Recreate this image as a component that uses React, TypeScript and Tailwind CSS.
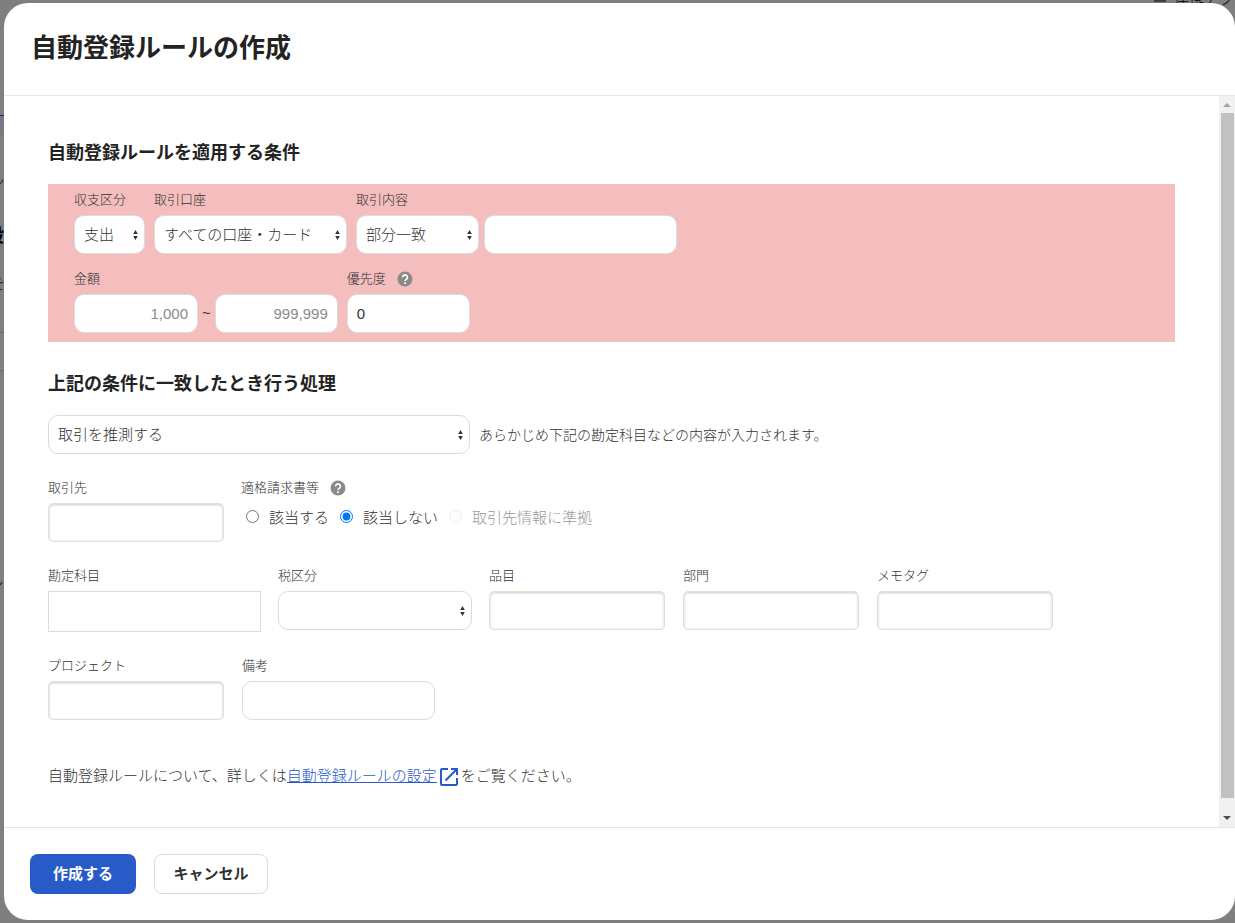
import { useId, useState } from "react";
import type { ReactNode } from "react";
import clsx from "clsx";

const controlBase = "block h-[39px] border bg-white px-[9px] text-[15px] text-[#323232] outline-none";

const inputVariants = {
  rounded: "rounded-[10px] border-[#dcdcdc]",
  warm: "rounded-[10px] border-[#e1dcd3]",
  square: "h-[41px] border-[#e1dcd3]",
  inset: "rounded-[5px] border-[#dfdfd8] shadow-[inset_0_1px_3px_rgba(0,0,0,0.2)]",
};

const invoiceOptions = [
  { value: "applicable", label: "該当する", disabled: false },
  { value: "not-applicable", label: "該当しない", disabled: false },
  { value: "partner", label: "取引先情報に準拠", disabled: true },
];

function HelpIcon() {
  return (
    <svg viewBox="0 0 16 16" className="h-4 w-4" aria-hidden="true">
      <circle cx="8" cy="8" r="7.5" fill="#8c8989" />
      <path d="M5.6 6.3a2.4 2.4 0 1 1 3.7 2C8.4 8.9 8 9.2 8 10.1" fill="none" stroke="#fff" strokeWidth="1.6" />
      <path d="M7.1 11.2h1.8v1.7H7.1z" fill="#fff" />
    </svg>
  );
}

function Field({
  id,
  label,
  help,
  children,
}: {
  id?: string;
  label: string;
  help?: boolean;
  children: ReactNode;
}) {
  return (
    <div>
      <div className="mb-[5px] flex h-[21px] items-center gap-[11px] text-[13px] leading-[21px]">
        <label htmlFor={id}>{label}</label>
        {help && (
          <button type="button" aria-label={`${label}のヘルプ`}>
            <HelpIcon />
          </button>
        )}
      </div>
      {children}
    </div>
  );
}

function Select({ id, label, options, className }: { id?: string; label?: string; options: string[]; className: string }) {
  return (
    <div className={clsx("relative", className)}>
      <select
        id={id}
        aria-label={label}
        className={clsx(controlBase, "w-full appearance-none rounded-[10px] border-[#dcdcdc] pt-px")}
      >
        {options.map((option) => (
          <option key={option}>{option}</option>
        ))}
      </select>
      <svg viewBox="0 0 5 10" className="pointer-events-none absolute right-[7px] top-[15px] h-[10px] w-[5px]" aria-hidden="true">
        <path d="M2.5 0 4.8 4H.2zM2.5 10 .2 6h4.6z" fill="#323232" />
      </svg>
    </div>
  );
}

function TextField({
  label,
  variant,
  className,
}: {
  label: string;
  variant: keyof typeof inputVariants;
  className: string;
}) {
  const id = useId();
  return (
    <Field id={id} label={label}>
      <input id={id} type="text" className={clsx(controlBase, inputVariants[variant], className)} />
    </Field>
  );
}

function SelectField({ label, options, className }: { label: string; options: string[]; className: string }) {
  const id = useId();
  return (
    <Field id={id} label={label}>
      <Select id={id} options={options} className={className} />
    </Field>
  );
}

// Dimmed page that peeks out around the dialog
function Backdrop() {
  return (
    <div aria-hidden="true" className="absolute inset-0 overflow-hidden bg-[#807f7f] text-[15px] leading-5 text-black">
      <span className="absolute -right-[14px] -top-[11px] flex h-5 items-center gap-[6px] whitespace-nowrap">
        <svg viewBox="0 0 16 16" className="h-4 w-4">
          <path d="M2 10h12M0 12.5h16" stroke="#000" strokeWidth="1" />
        </svg>
        連携アプリ
      </span>
      <div className="absolute left-0 top-[115px] h-5 w-2 border-t border-[#142c64] bg-[#777a84]" />
      <div className="absolute left-0 top-[332px] h-[39px] w-2 border-y border-[#6d6c69] bg-[#82817e]" />
      <span className="absolute -left-[11px] top-[168px]">ん</span>
      <span className="absolute -left-[14px] top-[226px] text-[18px] font-bold">設</span>
      <span className="absolute -left-[10px] top-[274px]">を</span>
      <span className="absolute -left-[11px] top-[570px]">し</span>
    </div>
  );
}

function ScrollRail() {
  return (
    <div aria-hidden="true" className="flex w-4 shrink-0 flex-col items-center bg-[#f1f1f1]">
      <svg viewBox="0 0 16 17" className="h-[17px] w-4">
        <path d="M8 7l4 4H4z" fill="#a3a3a3" />
      </svg>
      <div className="w-[13px] flex-1 bg-[#c1c1c1]" />
      <svg viewBox="0 0 16 29" className="h-[29px] w-4">
        <path d="M8 22l4-4H4z" fill="#505050" />
      </svg>
    </div>
  );
}

export default function App() {
  const [invoice, setInvoice] = useState("not-applicable");
  const amountId = useId();
  const contentId = useId();
  const priorityId = useId();

  return (
    <div className="relative flex min-h-screen flex-col pb-[3px] pl-1 pt-[3px] font-['Liberation_Sans','Noto_Sans_CJK_JP',sans-serif] font-light text-[#323232]">
      <Backdrop />
      <div
        role="dialog"
        aria-modal="true"
        aria-labelledby="dialog-title"
        className="relative flex flex-1 flex-col overflow-hidden rounded-3xl bg-white"
      >
        <header className="border-b border-[#e6e6e6] px-[27px] pb-[29px] pt-[27px]">
          <h1 id="dialog-title" className="text-[26px] font-bold leading-9 text-[#232323]">
            自動登録ルールの作成
          </h1>
        </header>

        <div className="flex flex-1">
          <main className="min-w-0 flex-1 px-11 pb-9 pt-[45px]">
            <h2 className="text-[18px] font-bold leading-6 text-[#232323]">自動登録ルールを適用する条件</h2>
            <section className="mt-[19px] flex flex-col gap-[14px] bg-[#f4bebe] pb-[9px] pl-[26px] pt-[5px]">
              <div className="flex gap-[9px]">
                <SelectField label="収支区分" options={["支出", "収入"]} className="w-[71px]" />
                <SelectField label="取引口座" options={["すべての口座・カード"]} className="w-[193px]" />
                <Field id={contentId} label="取引内容">
                  <div className="flex gap-[5px]">
                    <Select label="一致条件" options={["部分一致", "前方一致", "後方一致", "完全一致"]} className="w-[123px]" />
                    <input id={contentId} type="text" className={clsx(controlBase, inputVariants.rounded, "w-[193px]")} />
                  </div>
                </Field>
              </div>
              <div className="flex gap-[9px]">
                <Field id={amountId} label="金額">
                  <div className="flex items-center gap-1 text-[15px]">
                    <input
                      id={amountId}
                      type="text"
                      placeholder="1,000"
                      className={clsx(controlBase, inputVariants.rounded, "w-[124px] text-right placeholder:text-[#8c8989]")}
                    />
                    ~
                    <input
                      type="text"
                      aria-label="金額の上限"
                      placeholder="999,999"
                      className={clsx(controlBase, inputVariants.rounded, "w-[123px] text-right placeholder:text-[#8c8989]")}
                    />
                  </div>
                </Field>
                <Field id={priorityId} label="優先度" help>
                  <input
                    id={priorityId}
                    type="text"
                    defaultValue="0"
                    className={clsx(controlBase, inputVariants.rounded, "w-[123px]")}
                  />
                </Field>
              </div>
            </section>

            <h2 className="mt-[30px] text-[18px] font-bold leading-6 text-[#232323]">上記の条件に一致したとき行う処理</h2>
            <div className="mt-[19px] flex items-center gap-[9px]">
              <Select label="処理" options={["取引を推測する", "取引を登録する", "無視する"]} className="w-[422px]" />
              <p className="text-[14px] leading-5">あらかじめ下記の勘定科目などの内容が入力されます。</p>
            </div>

            <div className="mt-[23px] flex gap-[17px]">
              <TextField label="取引先" variant="inset" className="w-[176px]" />
              <Field label="適格請求書等" help>
                <div role="radiogroup" aria-label="適格請求書等" className="flex gap-[11px] pl-[5px] pt-[3px] text-[15px] leading-6">
                  {invoiceOptions.map((option) => (
                    <label
                      key={option.value}
                      className={clsx("flex items-center gap-[10px]", option.disabled && "text-[#9a9898]")}
                    >
                      <input
                        type="radio"
                        name="invoice"
                        value={option.value}
                        disabled={option.disabled}
                        checked={invoice === option.value}
                        onChange={() => setInvoice(option.value)}
                        className="mb-[3px] h-[13px] w-[13px] disabled:opacity-30"
                      />
                      {option.label}
                    </label>
                  ))}
                </div>
              </Field>
            </div>

            <div className="mt-[23px] flex gap-[17px]">
              <TextField label="勘定科目" variant="square" className="w-[213px]" />
              <SelectField label="税区分" options={[""]} className="w-[194px]" />
              <div className="flex gap-[18px]">
                <TextField label="品目" variant="inset" className="w-[176px]" />
                <TextField label="部門" variant="inset" className="w-[176px]" />
                <TextField label="メモタグ" variant="inset" className="w-[176px]" />
              </div>
            </div>

            <div className="mt-[23px] flex gap-[18px]">
              <TextField label="プロジェクト" variant="inset" className="w-[176px]" />
              <TextField label="備考" variant="warm" className="w-[193px]" />
            </div>

            <p className="mt-11 text-[15px] leading-6">
              自動登録ルールについて、詳しくは
              <a href="#rules" className="text-[#285ac8] underline">
                自動登録ルールの設定
                <svg viewBox="0 0 18 18" className="mx-[3px] inline-block h-[18px] w-[18px] align-[-5px]" aria-hidden="true">
                  <path d="M8 1H2a1 1 0 0 0-1 1v14a1 1 0 0 0 1 1h14a1 1 0 0 0 1-1v-6" fill="none" stroke="currentColor" strokeWidth="2" />
                  <path d="M11 1h6v6M17 1 5.5 12.5" fill="none" stroke="currentColor" strokeWidth="2" />
                </svg>
              </a>
              をご覧ください。
            </p>
          </main>
          <ScrollRail />
        </div>

        <footer className="flex gap-[18px] border-t border-[#e6e6e6] p-[26px]">
          <button type="button" className="h-10 w-[106px] rounded-lg bg-[#285ac8] text-[15px] font-bold text-white">
            作成する
          </button>
          <button type="button" className="h-10 w-[114px] rounded-lg border border-[#dcdcdc] bg-white text-[15px] font-bold">
            キャンセル
          </button>
        </footer>
      </div>
    </div>
  );
}
